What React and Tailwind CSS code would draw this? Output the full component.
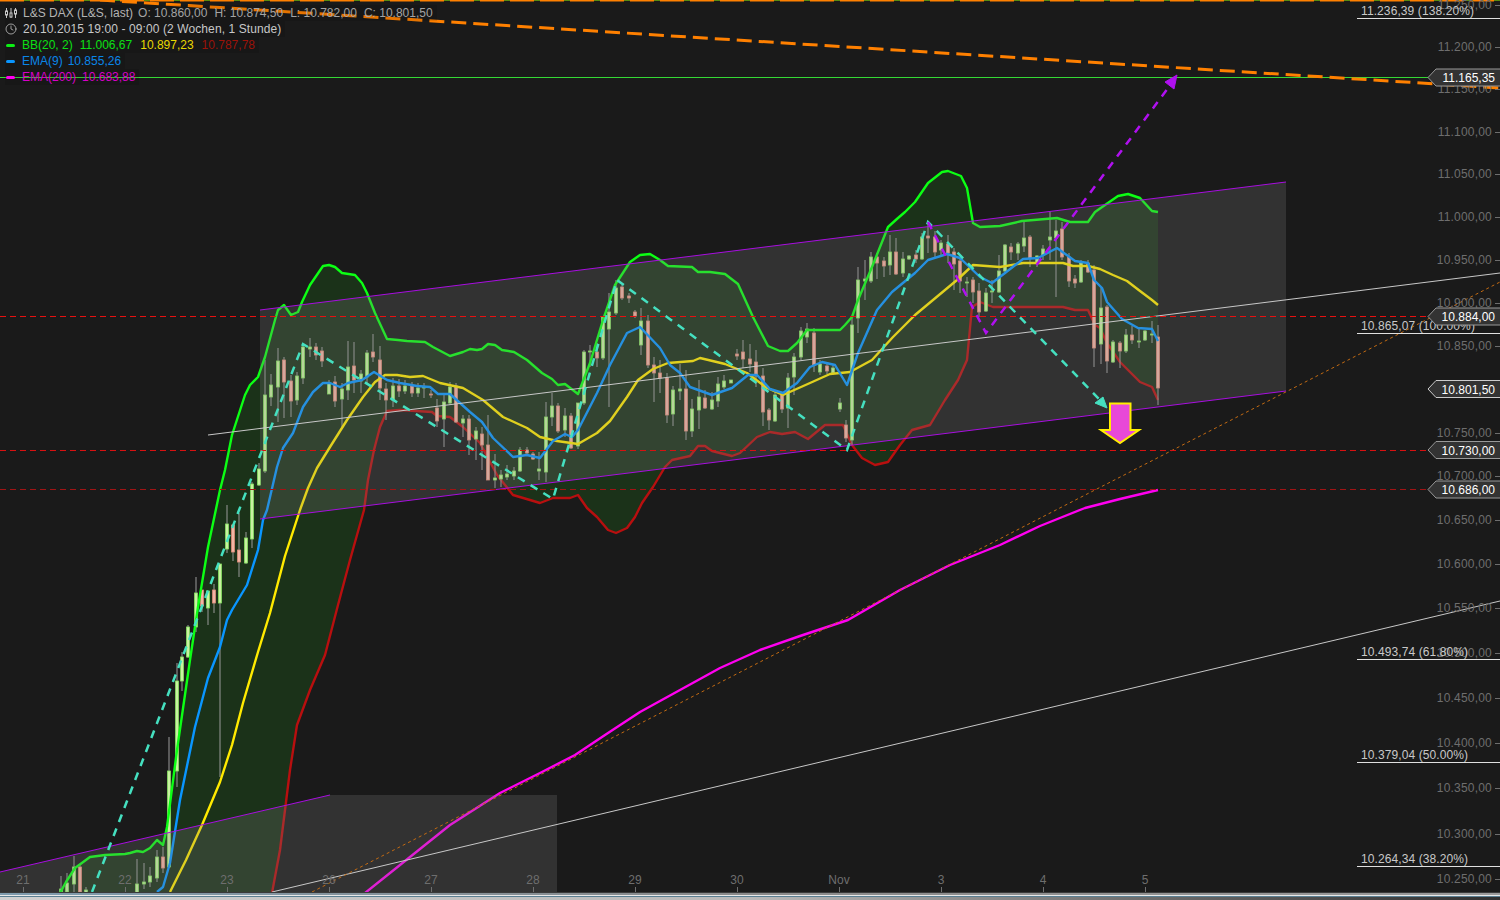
import { Clock } from 'lucide-react'

const bbUpper = '60,893 66,882 75,868 90,857 105,855 125,854 130,853 137,851 143,852 150,848 157,840 163,845 167,827 177,750 190,660 198,607 208,547 220,490 225,470 232,435 245,395 250,385 258,377 265,357 275,320 278,310 284,305 291,315 298,312 302,302 310,285 323,266 329,265 335,267 342,273 355,275 362,283 367,293 375,313 387,339 398,340 407,341 425,342 433,347 450,356 463,352 470,349 477,350 482,349 488,344 495,345 502,350 514,352 527,360 542,373 552,379 558,385 565,384 578,394 590,363 603,320 615,285 630,262 640,255 650,254 660,260 668,266 692,267 698,272 710,272 725,274 738,284 753,317 768,346 780,351 788,351 797,343 807,330 840,330 845,325 852,317 858,300 872,267 888,227 898,218 905,212 915,202 928,183 942,172 948,171 961,176 967,188 973,223 980,227 1000,226 1022,221 1057,218 1070,222 1088,222 1095,212 1105,205 1118,196 1128,194 1140,198 1152,211 1158,212'
const bbMid = '170,892 186,860 202,825 220,782 232,745 243,703 258,652 270,613 285,556 300,510 308,488 317,468 330,447 347,420 363,397 375,382 385,375 397,375 410,377 423,376 440,383 463,388 483,400 503,417 527,428 540,437 557,441 578,444 597,433 610,421 627,397 638,380 653,369 668,363 693,361 700,358 725,364 747,373 767,388 783,395 810,383 830,374 850,372 872,360 893,337 915,315 933,300 957,280 973,265 1000,267 1023,263 1063,263 1073,266 1088,266 1100,269 1113,275 1127,281 1140,291 1152,300 1158,305'
const bbLower = '272,893 280,850 285,810 290,770 297,725 310,690 325,655 338,605 350,560 364,510 368,480 374,450 380,427 387,411 400,410 432,412 437,416 450,417 463,427 480,443 497,475 513,495 530,500 540,503 553,498 570,498 578,495 587,508 597,517 608,530 616,533 627,528 635,517 642,503 653,487 665,467 672,460 690,456 698,446 705,446 712,451 732,456 740,453 757,437 770,432 782,434 795,432 808,439 825,425 843,425 852,445 862,458 875,465 888,462 900,445 912,430 930,425 945,400 958,380 967,360 972,307 980,302 993,307 1033,307 1063,307 1075,310 1088,310 1095,325 1100,328 1107,343 1120,362 1140,382 1152,387 1158,400'
const ema9 = '157,892 163,887 170,863 180,800 195,727 208,678 220,647 227,620 232,610 247,585 258,550 263,520 267,510 277,467 283,448 293,433 303,407 313,392 323,383 330,383 340,387 348,383 362,380 374,372 387,380 400,383 417,386 430,387 438,394 450,394 470,412 482,422 493,438 513,457 527,455 540,458 553,441 565,434 572,437 578,430 597,393 610,365 627,333 640,327 660,348 670,365 680,373 690,387 712,395 732,388 748,375 757,375 770,389 783,393 797,383 810,367 822,362 835,365 847,385 858,353 877,310 892,292 915,273 928,260 947,254 960,258 980,277 992,283 1005,273 1023,259 1038,258 1057,248 1075,261 1088,263 1094,280 1102,288 1107,302 1122,319 1138,328 1152,329 1158,341'
const ema200 = '365,893 400,865 450,825 500,793 540,773 575,755 605,735 640,712 680,690 720,668 760,650 800,636 848,620 900,590 950,565 1000,545 1040,526 1085,508 1120,499 1158,490'

// x, body top, body bottom, wick top, wick bottom, 1 = green
const candles = [
  [61,889,893,876,893,1],[67,883,892,873,893,1],[74,867,884,856,893,1],[80,867,892,864,893,0],[86,890,893,887,893,1],
  [137,884,893,859,893,1],[144,882,884,863,889,1],[150,876,882,867,887,1],[157,857,878,850,882,1],[163,857,868,847,873,0],
  [169,771,867,737,868,1],[177,681,771,663,787,1],[182,657,681,652,691,1],[188,627,657,625,658,1],[196,593,627,577,632,1],
  [202,590,606,590,612,0],[208,591,608,591,625,1],[214,590,603,584,613,0],[220,564,603,564,777,1],[227,524,549,505,553,1],
  [233,525,552,525,561,0],[239,550,562,513,577,0],[246,538,563,532,564,1],[252,484,539,482,548,1],[259,469,485,463,486,1],
  [265,395,471,360,473,1],[271,385,397,374,406,1],[278,361,387,348,422,1],[284,360,382,357,418,0],[291,381,401,375,417,0],
  [297,376,400,372,405,1],[303,347,378,344,384,1],[310,347,349,338,357,1],[316,347,355,343,360,0],[322,351,361,347,367,0],
  [329,383,394,380,394,1],[335,382,401,376,407,0],[342,389,399,383,427,1],[348,367,390,341,400,1],[354,366,380,342,393,0],
  [361,374,381,370,393,1],[367,353,377,350,383,1],[373,352,357,334,362,0],[380,360,388,346,400,0],[386,389,400,383,420,0],
  [393,386,400,378,407,1],[399,386,391,379,397,0],[405,386,391,380,394,1],[412,386,393,382,397,0],[418,388,393,383,397,1],
  [424,387,388,383,398,1],[431,394,395,390,398,0],[437,408,421,399,427,0],[444,402,419,393,447,1],[450,387,403,382,405,1],
  [456,386,422,383,423,0],[463,419,423,415,437,1],[469,419,440,415,455,0],[476,431,439,427,460,1],[482,434,445,427,470,0],
  [488,445,480,415,480,0],[495,478,480,454,488,1],[501,475,479,470,487,1],[507,474,477,465,480,1],[514,471,476,467,480,1],
  [520,450,471,447,472,1],[527,450,453,447,455,0],[533,454,459,452,460,0],[539,469,471,452,480,1],[546,417,472,402,482,1],
  [552,406,417,393,426,1],[558,406,431,403,433,0],[565,416,430,408,437,1],[571,416,448,413,449,0],[578,403,446,403,449,1],
  [584,352,403,350,405,1],[590,351,352,345,367,1],[597,352,358,343,367,0],[603,317,358,316,360,1],[609,312,329,293,407,1],
  [616,288,313,280,315,1],[622,287,298,285,300,0],[629,296,298,293,303,0],[635,312,316,310,318,0],[641,321,345,308,355,1],
  [648,321,365,315,368,0],[654,365,373,357,402,0],[660,373,378,360,393,0],[667,378,415,373,423,0],[673,390,414,386,426,1],
  [680,389,391,364,400,1],[686,389,431,370,440,0],[692,409,431,399,437,1],[699,397,410,380,429,1],[705,398,408,390,409,0],
  [712,400,409,392,410,1],[718,384,401,377,407,1],[724,381,387,375,389,1],[731,380,383,380,383,1],[737,354,356,349,360,0],
  [743,352,359,340,368,0],[750,359,364,344,372,0],[756,362,376,350,387,0],[763,376,412,368,426,0],[769,410,420,408,430,0],
  [775,395,421,392,422,1],[782,394,409,392,413,0],[788,378,408,373,428,1],[794,357,377,353,395,1],[801,331,357,327,360,1],
  [807,329,337,323,343,1],[814,333,365,328,372,0],[820,364,372,360,375,1],[827,366,371,362,374,0],[833,368,373,365,375,1],
  [840,403,409,398,412,1],[846,425,438,420,442,0],[852,325,440,318,445,1],[858,280,318,267,333,1],[865,279,281,260,300,1],
  [871,257,281,252,283,1],[877,257,263,253,279,0],[884,261,266,257,277,0],[890,252,265,235,275,1],[896,252,274,238,275,0],
  [903,259,273,252,277,1],[909,256,259,255,260,1],[916,255,259,250,263,0],[922,237,259,233,260,1],[928,236,238,223,253,0],
  [935,237,252,231,257,0],[941,243,250,240,255,1],[948,244,253,235,263,0],[954,252,264,248,290,0],[960,261,281,258,293,0],
  [967,282,283,277,297,1],[973,280,292,277,303,0],[979,291,312,283,317,0],[986,293,311,288,312,1],[992,291,292,280,303,1],
  [999,271,292,255,293,1],[1005,245,271,244,272,1],[1011,247,252,243,260,0],[1018,244,253,242,260,1],[1024,238,246,220,252,1],
  [1030,237,258,235,267,0],[1037,256,263,255,267,1],[1043,249,255,245,260,1],[1050,237,240,212,260,1],[1056,231,238,220,297,1],
  [1062,229,257,222,260,0],[1069,257,281,253,287,0],[1075,279,283,275,288,0],[1081,263,282,260,283,1],[1088,263,272,260,273,0],
  [1094,270,348,265,367,0],[1101,308,344,288,364,1],[1107,307,361,305,373,0],[1113,342,362,340,363,1],[1120,343,351,341,368,0],
  [1126,335,351,329,353,1],[1132,335,340,326,344,0],[1139,341,342,328,348,1],[1145,331,340,330,341,1],[1152,334,335,321,343,1],
  [1158,337,388,325,405,0],
]

const axis = [
  ['11.250,00',5],['11.200,00',47],['11.150,00',89],['11.100,00',132],['11.050,00',174],['11.000,00',217],['10.950,00',260],
  ['10.900,00',303],['10.850,00',346],['10.750,00',433],['10.700,00',476],['10.650,00',520],['10.600,00',564],['10.550,00',608],
  ['10.500,00',653],['10.450,00',698],['10.400,00',743],['10.350,00',788],['10.300,00',834],['10.250,00',879],
]
const dates = [['21',23],['22',125],['23',227],['26',329],['27',431],['28',533],['29',635],['30',737],['Nov',839],['3',941],['4',1043],['5',1145]]
const fibs = [['11.236,39 (138.20%)',18],['10.865,07 (100.00%)',333],['10.493,74 (61.80%)',659],['10.379,04 (50.00%)',762],['10.264,34 (38.20%)',866]]
const tags = [['11.165,35',77.5,'#999'],['10.884,00',316.5,'#999'],['10.801,50',389,'#ccc'],['10.730,00',450,'#999'],['10.686,00',489.5,'#999']]

const PriceTag = ({ label, y, border }) => (
  <g>
    <polygon points={`1428,${y} 1436,${y - 8.5} 1501,${y - 8.5} 1501,${y + 8.5} 1436,${y + 8.5}`} fill="#333" stroke={border} />
    <text x="1495" y={y + 4.5} textAnchor="end" fill="#fff" className="text-xs">{label}</text>
  </g>
)

const Chart = () => (
  <svg viewBox="0 0 1500 892" className="absolute inset-0 w-[1500px] h-[892px]">
    {/* top edge */}
    <line x1="0" y1="0.5" x2="1500" y2="0.5" stroke="#5a8a10" strokeWidth="1" />
    <line x1="0" y1="0.5" x2="1500" y2="0.5" stroke="#ff8000" strokeWidth="2" strokeDasharray="24 6" />

    {/* bollinger + emas, the channels sit over them */}
    <polygon points={`${bbUpper} ${bbLower.split(' ').reverse().join(' ')}`} fill="#1f7318" fillOpacity="0.28" />
    <polyline points={bbLower} fill="none" stroke="#b80f0f" strokeWidth="2.4" strokeLinejoin="round" />
    {candles.map(([x, top, bot, wt, wb, up]) => (
      <g key={x}>
        <line x1={x} y1={wt} x2={x} y2={wb} stroke="#9a9a9a" />
        <rect x={x - 1.5} y={top} width="3" height={Math.max(bot - top, 1)} fill={up ? '#c8f2a0' : '#f2b4a4'} stroke={up ? '#86e060' : '#dc8c78'} strokeWidth="0.8" />
      </g>
    ))}
    <polyline points={bbMid} fill="none" stroke="#ffea00" strokeWidth="2.4" strokeLinejoin="round" />
    <polyline points={ema9} fill="none" stroke="#0a96ff" strokeWidth="2.4" strokeLinejoin="round" />
    <polyline points={bbUpper} fill="none" stroke="#0cff14" strokeWidth="2.4" strokeLinejoin="round" />
    <polyline points={ema200} fill="none" stroke="#ff00f0" strokeWidth="2.4" strokeLinejoin="round" />

    <polygon points="260,310 1286,182 1286,391 260,519" fill="#808080" fillOpacity="0.245" />
    <polygon points="0,872 330,795 557,795 557,892 0,892" fill="#808080" fillOpacity="0.245" />

    <line x1="260" y1="310" x2="1286" y2="182" stroke="#a80ee0" />
    <line x1="260" y1="519" x2="1286" y2="391" stroke="#a80ee0" />
    <line x1="0" y1="872" x2="330" y2="795" stroke="#a80ee0" />

    <line x1="208" y1="435" x2="1500" y2="273" stroke="#c8c8c8" />
    <line x1="272" y1="892" x2="1500" y2="601" stroke="#c8c8c8" />
    <line x1="312" y1="892" x2="1500" y2="282" stroke="#c26a12" strokeDasharray="3 3" />

    <line x1="0" y1="77.5" x2="1430" y2="77.5" stroke="#35d835" />
    <line x1="0" y1="316.5" x2="1430" y2="316.5" stroke="#e81010" strokeDasharray="6 4" />
    <line x1="0" y1="450.5" x2="1430" y2="450.5" stroke="#d81010" strokeDasharray="6 4" />
    <line x1="0" y1="489.5" x2="1430" y2="489.5" stroke="#a01414" strokeDasharray="6 4" />

    {/* wave counts */}
    <polyline points="92,892 303,344 553,499 617,280 847,450 928,222 1100,400" fill="none" stroke="#45e0c0" strokeWidth="2.5" strokeDasharray="8 7" />
    <polygon points="1107,408 1103,397 1095,403" fill="#45e0c0" stroke="#45e0c0" />
    <polyline points="928,222 986,333 1171,84" fill="none" stroke="#b010f0" strokeWidth="2.5" strokeDasharray="8 7" />
    <polygon points="1177,75 1165,82 1174,89" fill="#b010f0" stroke="#b010f0" />
    <polygon points="1110,403.5 1130.5,403.5 1130.5,430 1139,430 1120,443 1101,430 1110,430" fill="#e848d8" stroke="#ffee00" strokeWidth="2" />

    <line x1="100" y1="0" x2="1500" y2="88" stroke="#ff8000" strokeWidth="3" strokeDasharray="15 7" />

    {/* price axis */}
    {axis.map(([label, y]) => (
      <g key={label}>
        <text x="1492" y={y + 4} textAnchor="end" fill="#6e6e6e" className="text-xs tracking-[0.2px]">{label}</text>
        <line x1="1495" y1={y + 0.5} x2="1500" y2={y + 0.5} stroke="#6e6e6e" />
      </g>
    ))}
    {dates.map(([label, x]) => (
      <g key={label}>
        <text x={x} y="884" textAnchor="middle" fill="#6e6e6e" className="text-xs">{label}</text>
        <line x1={x + 0.5} y1="887" x2={x + 0.5} y2="892" stroke="#6e6e6e" />
      </g>
    ))}
    {fibs.map(([label, y]) => (
      <g key={label}>
        <text x="1361" y={y - 3} fill="#c8c8c8" className="text-xs tracking-[0.1px]">{label}</text>
        <line x1="1357" y1={y + 0.5} x2="1500" y2={y + 0.5} stroke="#e0e0e0" />
      </g>
    ))}
    {tags.map(([label, y, border]) => (
      <PriceTag key={label} label={label} y={y} border={border} />
    ))}
  </svg>
)

const Dash = ({ className }) => <span className={`w-[9px] h-[3px] mx-[1px] mr-[7px] rounded-sm ${className}`} />

const Legend = () => (
  <div className="absolute left-[5px] top-[5px] flex flex-col text-xs">
    <div className="flex items-center h-4 w-fit pr-1 bg-black/10 text-[#a4a4a4]">
      <svg width="12" height="12" viewBox="0 0 12 12" className="mr-[6px] text-[#c8c8c8]" fill="none" stroke="currentColor">
        <path d="M1.5 1v10M6 1v10M10.5 1v10" />
        <rect x="0.5" y="4" width="2" height="4" fill="#1a1a1a" />
        <rect x="5" y="6" width="2" height="4" fill="#1a1a1a" />
        <rect x="9.5" y="3" width="2" height="4" fill="#1a1a1a" />
      </svg>
      <span className="mr-[5px] text-[#b4b4b4]">L&amp;S DAX (L&amp;S, last)</span>
      <span className="mr-[7px]">O: 10.860,00</span>
      <span className="mr-[7px]">H: 10.874,50</span>
      <span className="mr-[7px]">L: 10.782,00</span>
      <span>C: 10.801,50</span>
    </div>
    <div className="flex items-center h-4 w-fit pr-1 bg-black/10 text-[#c8c8c8]">
      <Clock size={12} strokeWidth={1.5} className="mr-[6px]" />
      <span className="tracking-[0.1px]">20.10.2015 19:00 - 09:00 (2 Wochen, 1 Stunde)</span>
    </div>
    <div className="flex items-center h-4 w-fit pr-1 bg-black/10">
      <Dash className="bg-[#0cf014]" />
      <span className="mr-[7px] text-[#0ce014]">BB(20, 2)</span>
      <span className="mr-[8px] text-[#0ce014]">11.006,67</span>
      <span className="mr-[8px] text-[#e8d800]">10.897,23</span>
      <span className="text-[#9c1208]">10.787,78</span>
    </div>
    <div className="flex items-center h-4 w-fit pr-1 bg-black/10 text-[#0a86e8]">
      <Dash className="bg-[#0a96ff]" />
      <span className="mr-[5px]">EMA(9)</span>
      <span>10.855,26</span>
    </div>
    <div className="flex items-center h-4 w-fit pr-1 bg-black/10 text-[#d800c8]">
      <Dash className="bg-[#ff00f0]" />
      <span className="mr-[6px]">EMA(200)</span>
      <span>10.683,88</span>
    </div>
  </div>
)

const BottomStrip = () => (
  <div className="h-2 flex flex-col bg-[#1a1a1a]">
    <div className="h-px bg-[#3a3a3a]" />
    <div className="h-[2px] bg-gradient-to-r from-[#7f9cae] via-[#8a8a8a] to-[#9a9a9a]" />
    <div className="h-px bg-[#e8e8e8]" />
    <div className="h-px bg-[#5a7f92]" />
    <div className="h-[3px] bg-gradient-to-r from-[#d0d0d0] via-[#b8b8b8] to-[#303030]" />
  </div>
)

export default function App() {
  return (
    <div className="w-[1500px] h-[900px] flex flex-col overflow-hidden bg-[#1a1a1a] font-['Liberation_Sans',Arial,sans-serif]">
      <div className="relative flex-1">
        <Chart />
        <Legend />
      </div>
      <BottomStrip />
    </div>
  )
}
